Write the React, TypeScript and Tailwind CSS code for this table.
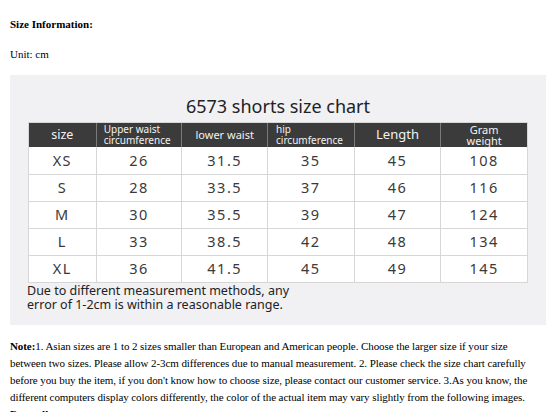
import React from 'react';

const rows = [
  ['XS', '26', '31.5', '35', '45', '108'],
  ['S', '28', '33.5', '37', '46', '116'],
  ['M', '30', '35.5', '39', '47', '124'],
  ['L', '33', '38.5', '42', '48', '134'],
  ['XL', '36', '41.5', '45', '49', '145'],
];

const cols = ['w-[68px]', 'w-[86px]', 'w-[86px]', 'w-[87px]', 'w-[87px]', 'w-[86px]'];

const SizeChart: React.FC = () => {
  return (
    <div className="mt-[12px] h-[250px] w-[536px] bg-[#f1f0f3] font-['Noto_Sans',sans-serif]">
      <div className="flex h-[47px] items-end justify-center pb-[5px] text-[18px] leading-[22px] text-[#222]">
        6573 shorts size chart
      </div>

      {/* Table */}
      <div className="ml-[18px] w-[500px] border border-[#d6d6d6] bg-white">
        <div className="flex h-[24px] bg-[#3b3b3b] text-[#f2f2f2]">
          <div className={`${cols[0]} flex items-center justify-center border-r border-[#7a7a7a] text-[12.5px]`}>size</div>
          <div className={`${cols[1]} flex flex-col items-start justify-center border-r border-[#7a7a7a] pl-[7px] text-[10px] leading-[11px]`}>
            <span>Upper waist</span>
            <span>circumference</span>
          </div>
          <div className={`${cols[2]} flex items-center justify-center border-r border-[#7a7a7a] text-[11px]`}>lower waist</div>
          <div className={`${cols[3]} flex flex-col items-start justify-center border-r border-[#7a7a7a] pl-[8px] text-[10px] leading-[11px]`}>
            <span>hip</span>
            <span>circumference</span>
          </div>
          <div className={`${cols[4]} flex items-center justify-center border-r border-[#7a7a7a] text-[13px]`}>Length</div>
          <div className={`${cols[5]} flex flex-col items-center justify-center text-[11px] leading-[11px]`}>
            <span>Gram</span>
            <span>weight</span>
          </div>
        </div>
        {rows.map((r, i) => (
          <div key={r[0]} className={`flex h-[27px] ${i > 0 ? 'border-t border-[#d6d6d6]' : ''}`}>
            {r.map((v, j) => (
              <div
                key={j}
                className={`${cols[j]} flex items-center justify-center text-[14.5px] tracking-[1.5px] text-[#3a3a3a] ${j < 5 ? 'border-r border-[#d6d6d6]' : ''}`}
              >
                {v}
              </div>
            ))}
          </div>
        ))}
      </div>

      <p className="ml-[17px] mt-[1px] text-[12.5px] leading-[14px] text-[#222]">
        Due to different measurement methods, any
        <br />
        error of 1-2cm is within a reasonable range.
      </p>
    </div>
  );
};

const App: React.FC = () => {
  return (
    <div className="h-[412px] overflow-hidden bg-white px-[10px] pt-[15px] font-['Liberation_Serif',serif] text-black">
      <p className="text-[11px] font-bold leading-[18px]">Size Information:</p>
      <p className="mt-[12px] text-[11px] leading-[18px]">Unit: cm</p>

      <SizeChart />

      <p className="mt-[13px] w-[530px] text-[11px] leading-[17px] tracking-[-0.08px]">
        <span className="font-bold">Note:</span>1. Asian sizes are 1 to 2 sizes smaller than European and American people. Choose the larger size if your size
        between two sizes. Please allow 2-3cm differences due to manual measurement. 2. Please check the size chart carefully
        before you buy the item, if you don't know how to choose size, please contact our customer service. 3.As you know, the
        different computers display colors differently, the color of the actual item may vary slightly from the following images.
      </p>
      <p className="text-[11px] font-bold leading-[17px]">Best sellers:</p>
    </div>
  );
};

export default App;
